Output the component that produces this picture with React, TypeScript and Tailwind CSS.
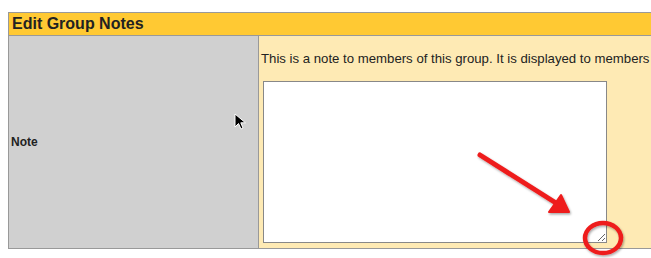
export default function App() {
  return (
    <div className="relative h-[258px] w-[651px] overflow-hidden bg-white font-['Liberation_Sans',Arial,sans-serif] text-[#222]">
      <div className="ml-[8px] mt-[12px] w-[720px] border border-[#999]">
        <div className="flex h-[23px] items-center border-b border-[#999] bg-[#ffc933] pl-[3px]">
          <h1 className="text-[16px] font-bold leading-none text-[#222]">Edit Group Notes</h1>
        </div>
        <div className="flex h-[212px]">
          <div className="flex w-[250px] shrink-0 items-center border-r border-[#999] bg-[#d0d0d0] pl-[2px]">
            <span className="text-[12px] font-bold">Note</span>
          </div>
          <div className="flex-1 bg-[#feeab4] pl-[2px] pt-[15px]">
            <p className="whitespace-nowrap text-[13.2px] leading-[15px]">
              This is a note to members of this group. It is displayed to members
            </p>
            <textarea className="ml-[2px] mt-[15px] block h-[162px] w-[344px] border border-[#888] bg-white outline-none" />
          </div>
        </div>
      </div>

      {/* mouse cursor */}
      <svg className="absolute left-[234px] top-[113px]" width="14" height="18" viewBox="0 0 14 18">
        <path d="M1 1 L1 14 L4.5 10.5 L7 16 L9 15 L6.8 9.8 L11.5 9.8 Z" fill="#000" stroke="#fff" strokeWidth="1" />
      </svg>

      {/* annotation arrow + circle */}
      <svg className="absolute left-0 top-0" width="651" height="258" viewBox="0 0 651 258">
        <defs>
          <filter id="sh" x="-20%" y="-20%" width="140%" height="140%">
            <feDropShadow dx="1" dy="1.5" stdDeviation="1.2" floodColor="#000" floodOpacity="0.35" />
          </filter>
        </defs>
        <g filter="url(#sh)">
          <line x1="480" y1="155" x2="556" y2="203" stroke="#ee1c1c" strokeWidth="5" strokeLinecap="round" />
          <path d="M569 212 L549 212 L561 195 Z" fill="#ee1c1c" stroke="#ee1c1c" strokeWidth="2" strokeLinejoin="round" />
          <ellipse cx="603" cy="238" rx="18" ry="15" fill="none" stroke="#ee1c1c" strokeWidth="4.5" />
        </g>
      </svg>
    </div>
  );
}
